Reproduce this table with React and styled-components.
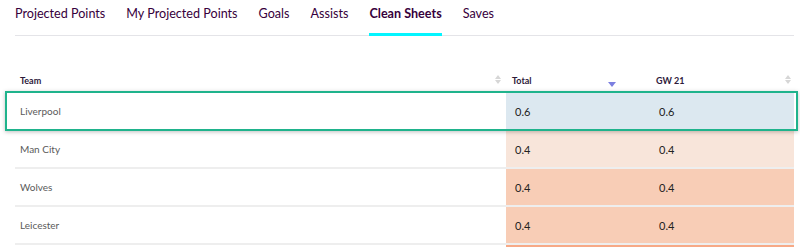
import React from 'react';
import styled, { createGlobalStyle } from 'styled-components';

const GlobalStyle = createGlobalStyle`
  body {
    margin: 0;
    background: #ffffff;
    font-family: Lato, "Open Sans", sans-serif;
  }
`;

const Page = styled.div`
  width: 800px;
  height: 247px;
  overflow: hidden;
  padding: 0 6px 0 15px;
  box-sizing: border-box;
`;

const Tabs = styled.nav`
  display: flex;
  gap: 21px;
  height: 36px;
  border-bottom: 1px solid #e4e4e8;
  box-sizing: border-box;
`;

const Tab = styled.div`
  font-size: 12.6px;
  color: #37003c;
  font-weight: ${p => (p.$active ? 700 : 400)};
  padding-top: 6px;
  box-sizing: border-box;
  height: 36px;
  margin-bottom: -1px;
  border-bottom: 3px solid ${p => (p.$active ? '#04f5ff' : 'transparent')};
  white-space: nowrap;
`;

const Table = styled.div`
  margin-top: 33px;
  display: grid;
  grid-template-columns: 491px 144px 144px;
`;

const HeadCell = styled.div`
  position: relative;
  height: 22px;
  display: flex;
  align-items: center;
  padding-left: ${p => (p.$first ? '5px' : '6px')};
  font-size: 9px;
  font-weight: 700;
  color: #2d1a3a;
`;

const Sorter = styled.span`
  position: absolute;
  right: ${p => p.$right}px;
  top: 6px;
  display: flex;
  flex-direction: column;
  gap: 1px;
`;

const Row = styled.div`
  display: contents;
`;

const TeamCell = styled.div`
  position: relative;
  height: 36px;
  display: flex;
  align-items: center;
  padding-left: 5px;
  font-size: 10px;
  color: #5a5a5a;
  border-bottom: 2px solid #eeeeee;
  ${p =>
    p.$highlight &&
    `
    border-bottom: 2px solid transparent;
    border-top: 2px solid transparent;
    &::after {
      content: '';
      position: absolute;
      left: -10px;
      top: -2px;
      width: 789px;
      height: 36px;
      border: 2px solid #1fb38c;
      box-shadow: 0 1px 4px rgba(0, 0, 0, 0.25);
      pointer-events: none;
      z-index: 2;
    }
  `}
`;

const ValueCell = styled.div`
  height: 36px;
  display: flex;
  align-items: center;
  padding-left: 9px;
  font-size: 11px;
  color: #222222;
  background: ${p => p.$bg};
  border-bottom: 2px solid #eeeeee;
  ${p => p.$highlight && 'border-top: 2px solid transparent; border-bottom-color: transparent;'}
`;

const SortArrows = ({ right }) => (
  <Sorter $right={right}>
    <svg width="6" height="4" viewBox="0 0 6 4">
      <path d="M3 0 L6 4 L0 4 Z" fill="#d6d6d6" />
    </svg>
    <svg width="6" height="4" viewBox="0 0 6 4">
      <path d="M0 0 L6 0 L3 4 Z" fill="#d6d6d6" />
    </svg>
  </Sorter>
);

const SortDown = styled.svg`
  position: absolute;
  right: 34px;
  top: 13px;
`;

const rows = [
  { team: 'Liverpool', total: '0.6', gw: '0.6', bg: '#dce8f0', highlight: true },
  { team: 'Man City', total: '0.4', gw: '0.4', bg: '#f8e5da' },
  { team: 'Wolves', total: '0.4', gw: '0.4', bg: '#f8cdb6' },
  { team: 'Leicester', total: '0.4', gw: '0.4', bg: '#f8cdb6' },
  { team: '', total: '', gw: '', bg: '#f7a986' },
];

const tabs = ['Projected Points', 'My Projected Points', 'Goals', 'Assists', 'Clean Sheets', 'Saves'];

export default function App() {
  return (
    <Page>
      <GlobalStyle />
      <Tabs>
        {tabs.map(t => (
          <Tab key={t} $active={t === 'Clean Sheets'}>{t}</Tab>
        ))}
      </Tabs>
      <Table>
        <HeadCell $first>
          Team
          <SortArrows right={5} />
        </HeadCell>
        <HeadCell>
          Total
          <SortDown width="8" height="5" viewBox="0 0 8 5">
            <path d="M0 0 L8 0 L4 5 Z" fill="#7b7fe0" />
          </SortDown>
        </HeadCell>
        <HeadCell>
          GW 21
          <SortArrows right={3} />
        </HeadCell>
        {rows.map((r, i) => (
          <Row key={i}>
            <TeamCell $highlight={r.highlight}>{r.team}</TeamCell>
            <ValueCell $bg={r.bg} $highlight={r.highlight}>{r.total}</ValueCell>
            <ValueCell $bg={r.bg} $highlight={r.highlight}>{r.gw}</ValueCell>
          </Row>
        ))}
      </Table>
    </Page>
  );
}
